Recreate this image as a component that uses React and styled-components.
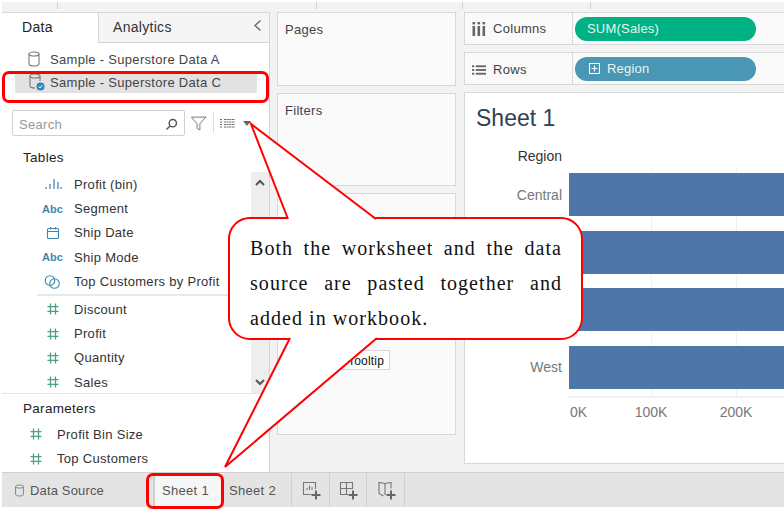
import styled, { createGlobalStyle } from 'styled-components';
import { LuFilter } from 'react-icons/lu';

const GlobalStyle = createGlobalStyle`
	html, body {
		margin: 0;
		padding: 0;
		background: #fff;
	}
	body {
		font-family: 'Liberation Sans', Arial, sans-serif;
		font-size: 13px;
		letter-spacing: 0.3px;
		color: #333;
	}
`;

const Cylinder = ({ size = 16, color = '#777' }) => (
	<svg width={size - 2} height={size} viewBox='0 0 14 16' fill='none' stroke={color} strokeWidth='1.1'>
		<ellipse cx='7' cy='3' rx='5' ry='2' />
		<path d='M2 3v10c0 1.2 2.2 2 5 2s5-.8 5-2V3' />
	</svg>
);

const ConnectedCylinder = () => (
	<svg width='20' height='20' viewBox='0 0 20 20' fill='none'>
		<ellipse cx='8' cy='4' rx='5' ry='2' stroke='#777' strokeWidth='1.1' />
		<path d='M3 4v10c0 1.2 2.2 2 5 2M13 4v5' stroke='#777' strokeWidth='1.1' />
		<circle cx='13.5' cy='14.5' r='4' fill='#2f86bd' />
		<path d='M11.6 14.6l1.4 1.4 2.4-2.8' stroke='#fff' strokeWidth='1' />
	</svg>
);

const Hash = () => (
	<svg width='14' height='14' viewBox='0 0 14 14' stroke='#4f9f85' strokeWidth='1.3'>
		<path d='M4.5 1.5v11M9.5 1.5v11M1.5 4.7h11M1.5 9.3h11' />
	</svg>
);

const BinBars = () => (
	<svg width='18' height='12' viewBox='0 0 18 12' stroke='#5a93b0' strokeWidth='1.4'>
		<path d='M2 11v-2M6 11V6M10 11V1M14 11V4M17 11V9' />
	</svg>
);

const Calendar = () => (
	<svg width='14' height='14' viewBox='0 0 14 14' fill='none' stroke='#3f87b0' strokeWidth='1.1'>
		<rect x='1.5' y='2.5' width='11' height='10' rx='1' />
		<path d='M1.5 5.5h11M4.5 1v2.5M9.5 1v2.5' />
	</svg>
);

const SetCircles = () => (
	<svg width='17' height='16' viewBox='0 0 17 16' fill='none' stroke='#3f87b0' strokeWidth='1.1'>
		<circle cx='6' cy='6.5' r='4.8' />
		<circle cx='10.5' cy='9.5' r='4.8' />
	</svg>
);

const SearchGlass = () => (
	<svg width='13' height='13' viewBox='0 0 13 13' fill='none' stroke='#555' strokeWidth='1.5'>
		<circle cx='7.8' cy='5.2' r='3.6' />
		<path d='M5 8l-3.5 3.5' />
	</svg>
);

const ListGrid = () => (
	<svg width='15' height='11' viewBox='0 0 15 11' stroke='#666' strokeWidth='1'>
		<path d='M0 1.5h2.5M4 1.5h11M0 4h2.5M4 4h11M0 6.5h2.5M4 6.5h11M0 9h2.5M4 9h11' strokeDasharray='2 .6' />
	</svg>
);

const Chevron = ({ up }) => (
	<svg width='10' height='7' viewBox='0 0 10 7' fill='none' stroke='#555' strokeWidth='2'>
		<path d={up ? 'M1 6l4-4 4 4' : 'M1 1l4 4 4-4'} />
	</svg>
);

const ColumnsIcon = () => (
	<svg width='13' height='14' viewBox='0 0 13 14' fill='#666'>
		<rect x='0' y='4' width='2.6' height='10' />
		<rect x='5' y='4' width='2.6' height='10' />
		<rect x='10' y='4' width='2.6' height='10' />
		<rect x='0' y='0' width='2.6' height='2.4' />
		<rect x='5' y='0' width='2.6' height='2.4' />
		<rect x='10' y='0' width='2.6' height='2.4' />
	</svg>
);

const RowsIcon = () => (
	<svg width='15' height='12' viewBox='0 0 15 12' fill='#666'>
		<rect x='0' y='1' width='2.4' height='2' />
		<rect x='0' y='5' width='2.4' height='2' />
		<rect x='0' y='9' width='2.4' height='2' />
		<rect x='4' y='1' width='11' height='2' />
		<rect x='4' y='5' width='11' height='2' />
		<rect x='4' y='9' width='11' height='2' />
	</svg>
);

const PlusBox = () => (
	<svg width='11' height='11' viewBox='0 0 11 11' fill='none' stroke='#fff' strokeWidth='1'>
		<rect x='.5' y='.5' width='10' height='10' />
		<path d='M2.5 5.5h6M5.5 2.5v6' />
	</svg>
);

const Plus = () => <path d='M14 10.5v9M9.5 15h9' stroke='#666' strokeWidth='2' fill='none' />;

const NewSheetIcon = () => (
	<svg width='20' height='20' viewBox='0 0 20 20' fill='none' stroke='#777' strokeWidth='1.1'>
		<path d='M9 14.5H1.5v-12h12V9' />
		<path d='M5 10V8M7.5 10V5.5M10 10V7' />
		<Plus />
	</svg>
);

const NewDashIcon = () => (
	<svg width='20' height='20' viewBox='0 0 20 20' fill='none' stroke='#777' strokeWidth='1.1'>
		<path d='M9 14.5H1.5v-12h12V9M1.5 8.5h12M7.5 2.5v12' />
		<Plus />
	</svg>
);

const NewStoryIcon = () => (
	<svg width='20' height='20' viewBox='0 0 20 20' fill='none' stroke='#777' strokeWidth='1.1'>
		<path d='M8 3.5v11.5M8 3.5L2 2.5v11l4.5 2.5M8 3.5l6-1v6' />
		<Plus />
	</svg>
);

const AbcIcon = () => <AbcTag>Abc</AbcTag>;

const fields = [
	{ Icon: BinBars, name: 'Profit (bin)' },
	{ Icon: AbcIcon, name: 'Segment' },
	{ Icon: Calendar, name: 'Ship Date' },
	{ Icon: AbcIcon, name: 'Ship Mode' },
	{ Icon: SetCircles, name: 'Top Customers by Profit', last: true },
	{ Icon: Hash, name: 'Discount' },
	{ Icon: Hash, name: 'Profit' },
	{ Icon: Hash, name: 'Quantity' },
	{ Icon: Hash, name: 'Sales' },
];

// East and South sit under the callout in the picture
const regions = ['Central', '', '', 'West'];

const App = () => {
	return (
		<>
			<GlobalStyle />
			<Page>
				<TopStrip>
					<StripMark $width={55} />
					<StripMark $width={258} />
					<StripMark $width={145} />
					<StripMark $width={127} />
				</TopStrip>
				<Main>
					<Sidebar>
						<Tabs>
							<DataTab>Data</DataTab>
							<AnalyticsTab>
								Analytics
								<Collapse>
									<svg width='9' height='13' viewBox='0 0 9 13' fill='none' stroke='#666' strokeWidth='1.4'>
										<path d='M7.5 1.5L2 6.5l5.5 5' />
									</svg>
								</Collapse>
							</AnalyticsTab>
						</Tabs>
						<Sources>
							<SourceRow>
								<SourceIcon><Cylinder /></SourceIcon>
								Sample - Superstore Data A
							</SourceRow>
							<SourceRow $selected>
								<SourceIcon><ConnectedCylinder /></SourceIcon>
								Sample - Superstore Data C
							</SourceRow>
						</Sources>
						<SearchRow>
							<SearchBox>
								Search
								<SearchGlass />
							</SearchBox>
							<ToolIcon><LuFilter size={17} strokeWidth={1.2} color='#666' /></ToolIcon>
							<ToolDivider />
							<ToolIcon><ListGrid /></ToolIcon>
							<Caret />
						</SearchRow>
						<SectionTitle>Tables</SectionTitle>
						<FieldArea>
							<FieldList>
								{fields.map((field) => (
									<FieldRow key={field.name} $last={field.last}>
										<FieldIcon><field.Icon /></FieldIcon>
										{field.name}
									</FieldRow>
								))}
							</FieldList>
							<ScrollBar>
								<Chevron up />
								<Chevron />
							</ScrollBar>
						</FieldArea>
						<ParamTitle>Parameters</ParamTitle>
						<ParamRow><ParamIcon><Hash /></ParamIcon>Profit Bin Size</ParamRow>
						<ParamRow><ParamIcon><Hash /></ParamIcon>Top Customers</ParamRow>
					</Sidebar>
					<CardColumn>
						<Card $height={74}><CardTitle>Pages</CardTitle></Card>
						<Card $height={93}><CardTitle>Filters</CardTitle></Card>
						<MarksCard>
							<MarkButton>Tooltip</MarkButton>
						</MarksCard>
					</CardColumn>
					<Workspace>
						<Shelf>
							<ShelfLabel><ColumnsIcon />Columns</ShelfLabel>
							<Pill $color='#00b283'>SUM(Sales)</Pill>
						</Shelf>
						<Shelf>
							<ShelfLabel $rows><RowsIcon />Rows</ShelfLabel>
							<Pill $color='#4a97b5'><PlusBox />Region</Pill>
						</Shelf>
						<SheetCard>
							<SheetTitle>Sheet 1</SheetTitle>
							<RegionHead>Region</RegionHead>
							<Chart>
								<Labels>
									{regions.map((region, i) => (
										<RegionLabel key={i}>{region}</RegionLabel>
									))}
								</Labels>
								<Plot>
									{regions.map((region, i) => (
										<Bar key={i} />
									))}
								</Plot>
							</Chart>
							<Axis>
								<Tick $left>0K</Tick>
								<Tick>100K</Tick>
								<Tick>200K</Tick>
							</Axis>
						</SheetCard>
					</Workspace>
				</Main>
				<BottomBar>
					<SourceTab><Cylinder size={13} />Data Source</SourceTab>
					<SheetTab $active>Sheet 1</SheetTab>
					<SheetTab>Sheet 2</SheetTab>
					<IconTab><NewSheetIcon /></IconTab>
					<IconTab><NewDashIcon /></IconTab>
					<IconTab><NewStoryIcon /></IconTab>
				</BottomBar>
				<SourceHighlight />
				<TabHighlight />
				<Callout>
					Both the worksheet and the data source are pasted together and added in workbook.
				</Callout>
				<TailLayer width='784' height='519' viewBox='0 0 784 519'>
					<polygon points='251,124 288,219.5 375,219.5' fill='#fff' />
					<polyline points='288,219 251,124 376,219' fill='none' stroke='#f00' strokeWidth='2' />
					<polygon points='225,467 290,337.5 377,337.5' fill='#fff' />
					<polyline points='290,338 225,467 377,338' fill='none' stroke='#f00' strokeWidth='2' />
				</TailLayer>
			</Page>
		</>
	);
};

const AbcTag = styled.span`
	font-size: 11px;
	font-weight: bold;
	letter-spacing: 0;
	color: #3f87b0;
`;

const Page = styled.div`
	position: relative;
	width: 784px;
	height: 519px;
	padding: 2px 0 12px 2px;
	box-sizing: border-box;
	overflow: hidden;
	display: flex;
	flex-direction: column;
`;

const TopStrip = styled.div`
	height: 10px;
	flex: none;
	display: flex;
	background: #f3f3f3;
`;

const StripMark = styled.div`
	width: ${({ $width }) => $width}px;
	height: 7px;
	border-right: 1px solid #d0d0d0;
`;

const Main = styled.div`
	flex: 1;
	min-height: 0;
	display: flex;
	background: #f3f3f3;
`;

const Sidebar = styled.aside`
	width: 267px;
	flex: none;
	background: #fff;
	border-right: 1px solid #d4d4d4;
	display: flex;
	flex-direction: column;
`;

const Tabs = styled.div`
	height: 31px;
	flex: none;
	display: flex;
	font-size: 14px;
`;

const DataTab = styled.div`
	width: 97px;
	padding: 6px 0 0 20px;
	box-sizing: border-box;
	border-top: 1px solid #d8d8d8;
	border-right: 1px solid #d4d4d4;
	color: #222;
`;

const AnalyticsTab = styled.div`
	flex: 1;
	position: relative;
	padding: 6px 0 0 14px;
	background: #f5f5f5;
	border-top: 1px solid #d8d8d8;
	border-bottom: 1px solid #d4d4d4;
	color: #333;
`;

const Collapse = styled.span`
	position: absolute;
	right: 7px;
	top: 6px;
`;

const Sources = styled.div`
	padding: 6px 12px 0 13px;
	display: flex;
	flex-direction: column;
	gap: 4px;
`;

const SourceRow = styled.div`
	height: 20px;
	box-sizing: border-box;
	padding-bottom: ${({ $selected }) => ($selected ? '2px' : '0')};
	display: flex;
	align-items: center;
	color: #444;
	background: ${({ $selected }) => ($selected ? '#e2e2e2' : 'transparent')};
`;

const SourceIcon = styled.span`
	width: 35px;
	padding-left: 12px;
	box-sizing: border-box;
	display: flex;
	align-items: center;
`;

const SearchRow = styled.div`
	height: 26px;
	margin-top: 17px;
	padding-left: 10px;
	flex: none;
	display: flex;
	align-items: center;
`;

const SearchBox = styled.div`
	width: 173px;
	height: 26px;
	padding: 2px 6px 0 6px;
	box-sizing: border-box;
	border: 1px solid #d0d0d0;
	border-radius: 2px;
	display: flex;
	align-items: center;
	justify-content: space-between;
	color: #999;
`;

const ToolIcon = styled.span`
	width: 26px;
	display: flex;
	justify-content: center;
`;

const ToolDivider = styled.span`
	width: 1px;
	height: 20px;
	background: #ddd;
	margin: 0 0 0 2px;
`;

const Caret = styled.span`
	width: 0;
	height: 0;
	margin-left: 3px;
	border-left: 4px solid transparent;
	border-right: 4px solid transparent;
	border-top: 5px solid #666;
`;

const SectionTitle = styled.div`
	height: 20px;
	margin-top: 12px;
	padding-left: 21px;
	flex: none;
	line-height: 20px;
	font-size: 13.5px;
	color: #222;
`;

const FieldArea = styled.div`
	height: 221px;
	margin-top: 4px;
	flex: none;
	display: flex;
	justify-content: space-between;
	border-bottom: 1px solid #e6e6e6;
`;

const FieldList = styled.div`
	width: 210px;
	padding: 0 0 0 35px;
`;

const FieldRow = styled.div`
	height: 24.4px;
	display: flex;
	align-items: center;
	color: #333;
	border-bottom: ${({ $last }) => ($last ? '2px solid #e8e8e8' : 'none')};
	margin-bottom: ${({ $last }) => ($last ? '1px' : '0')};
`;

const FieldIcon = styled.span`
	width: 37px;
	flex: none;
	display: flex;
	justify-content: center;
	padding-right: 6px;
	box-sizing: border-box;
`;

const ScrollBar = styled.div`
	width: 18px;
	height: 221px;
	padding: 7px 0;
	box-sizing: border-box;
	background: #eee;
	display: flex;
	flex-direction: column;
	align-items: center;
	justify-content: space-between;
`;

const ParamTitle = styled(SectionTitle)`
	margin-top: 5px;
`;

const ParamRow = styled.div`
	height: 24.5px;
	display: flex;
	align-items: center;
	color: #333;
	margin-top: 3px;
	padding-left: 27px;
	&:last-child {
		margin-top: 0;
	}
`;

const ParamIcon = styled.span`
	width: 28px;
	flex: none;
	display: flex;
`;

const CardColumn = styled.div`
	width: 179px;
	flex: none;
	margin: 0 8px 0 7px;
	padding-bottom: 37px;
	box-sizing: border-box;
	display: flex;
	flex-direction: column;
	gap: 7px;
`;

const Card = styled.section`
	height: ${({ $height }) => $height}px;
	flex: none;
	box-sizing: border-box;
	background: #fafafa;
	border: 1px solid #d8d8d8;
`;

const CardTitle = styled.div`
	padding: 9px 0 0 7px;
	color: #444;
`;

const MarksCard = styled(Card)`
	flex: 1;
	padding: 156px 0 0 40px;
`;

const MarkButton = styled.div`
	width: 72px;
	height: 20px;
	box-sizing: border-box;
	padding: 3px 0 0 29px;
	font-size: 12px;
	letter-spacing: 0.2px;
	color: #111;
	background: #fff;
	border: 1px solid #d8d8d8;
`;

const Workspace = styled.div`
	flex: 1;
	min-width: 0;
	padding-bottom: 8px;
	display: flex;
	flex-direction: column;
`;

const Shelf = styled.div`
	height: 33px;
	flex: none;
	margin-bottom: 7px;
	box-sizing: border-box;
	background: #fafafa;
	border: 1px solid #d8d8d8;
	border-right: none;
	display: flex;
	align-items: center;
`;

const ShelfLabel = styled.div`
	width: 108px;
	height: 100%;
	box-sizing: border-box;
	padding-left: 7px;
	padding-top: ${({ $rows }) => ($rows ? '2px' : '0')};
	border-right: 1px solid #d8d8d8;
	display: flex;
	align-items: center;
	gap: 7px;
	color: #444;
	svg {
		width: 14px;
	}
`;

const Pill = styled.div`
	width: 181px;
	height: 24px;
	margin-left: 2px;
	padding-left: 12px;
	box-sizing: border-box;
	border-radius: 12px;
	background: ${({ $color }) => $color};
	color: #e6f5f2;
	display: flex;
	align-items: center;
	gap: 7px;
	letter-spacing: 0.2px;
	svg {
		margin-left: 2px;
	}
`;

const SheetCard = styled.section`
	flex: 1;
	min-height: 0;
	box-sizing: border-box;
	overflow: hidden;
	background: #fff;
	border: 1px solid #d8d8d8;
	border-right: none;
	letter-spacing: 0;
	font-size: 14px;
	display: flex;
	flex-direction: column;
`;

const SheetTitle = styled.h1`
	margin: 0;
	padding: 12px 0 0 11px;
	height: 43px;
	box-sizing: border-box;
	font-size: 23px;
	font-weight: normal;
	color: #2f3f52;
`;

const RegionHead = styled.div`
	width: 97px;
	height: 31px;
	padding-top: 12px;
	box-sizing: border-box;
	text-align: right;
	color: #333;
`;

const Chart = styled.div`
	height: 235px;
	flex: none;
	display: flex;
	gap: 7px;
`;

const Labels = styled.div`
	width: 97px;
	flex: none;
	display: grid;
	grid-template-rows: repeat(4, 57.67px);
	padding-top: 0;
`;

const RegionLabel = styled.div`
	height: 43px;
	margin-top: 6px;
	display: flex;
	align-items: center;
	justify-content: flex-end;
	color: #777;
`;

const Plot = styled.div`
	flex: 1;
	height: 231px;
	padding-top: 6px;
	box-sizing: border-box;
	border-bottom: 2px solid #f2f2f2;
	display: grid;
	grid-template-rows: repeat(4, 57.67px);
	background-image: repeating-linear-gradient(90deg, transparent 0 83.5px, #f0f0f0 83.5px 84.5px);
	background-position: -1px 0;
`;

const Bar = styled.div`
	height: 43px;
	background: #4e76a8;
`;

const Axis = styled.div`
	display: grid;
	grid-template-columns: 41px 82px 88px;
	margin: 2px 0 0 104px;
	color: #777;
`;

const Tick = styled.span`
	text-align: ${({ $left }) => ($left ? 'left' : 'center')};
	padding-left: ${({ $left }) => ($left ? '1px' : '0')};
`;

const BottomBar = styled.footer`
	height: 35px;
	flex: none;
	box-sizing: border-box;
	display: flex;
	background: #e4e4e4;
	border-top: 1px solid #cfcfcf;
	color: #555;
`;

const SourceTab = styled.div`
	width: 145px;
	padding-left: 12px;
	box-sizing: border-box;
	display: flex;
	align-items: center;
	gap: 5px;
	letter-spacing: 0.15px;
	svg {
		flex: none;
	}
`;

const SheetTab = styled.div`
	width: ${({ $active }) => ($active ? '69px' : '70px')};
	box-sizing: border-box;
	display: flex;
	align-items: center;
	padding-left: 7px;
	margin-left: ${({ $active }) => ($active ? '6px' : '0')};
	background: ${({ $active }) => ($active ? '#f6f6f6' : 'transparent')};
	border-left: ${({ $active }) => ($active ? '2px solid #cfcfcf' : 'none')};
	border-right: ${({ $active }) => ($active ? 'none' : '1px solid #cfcfcf')};
`;

const IconTab = styled.div`
	width: 37.5px;
	padding-left: 3px;
	box-sizing: border-box;
	display: flex;
	align-items: center;
	justify-content: center;
	border-right: 1px solid #cfcfcf;
`;

const Highlight = styled.div`
	position: absolute;
	box-sizing: border-box;
	border: 3px solid #f00;
	border-radius: 7px;
`;

const SourceHighlight = styled(Highlight)`
	left: 2px;
	top: 71px;
	width: 267px;
	height: 32px;
`;

const TabHighlight = styled(Highlight)`
	left: 146px;
	top: 473px;
	width: 78px;
	height: 36px;
`;

const Callout = styled.div`
	position: absolute;
	left: 228px;
	top: 217px;
	width: 355px;
	height: 123px;
	box-sizing: border-box;
	padding: 12px 19px 0 20px;
	background: #fff;
	border: 2.5px solid #f00;
	border-radius: 22px;
	font-family: 'Liberation Serif', 'Times New Roman', serif;
	font-size: 20px;
	line-height: 35px;
	letter-spacing: 1.05px;
	text-align: justify;
	color: #111;
`;

const TailLayer = styled.svg`
	position: absolute;
	left: 0;
	top: 0;
	pointer-events: none;
`;

export default App;
